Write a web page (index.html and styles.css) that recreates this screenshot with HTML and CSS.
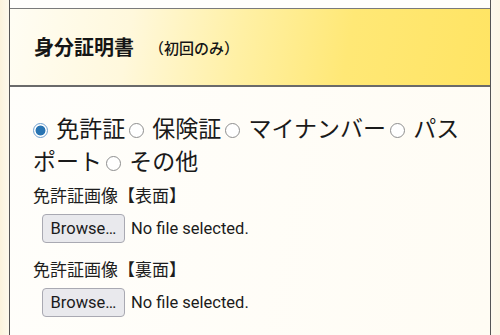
FILE: index.html
```html
<!DOCTYPE html>
<html lang="ja">
<head>
<meta charset="utf-8">
<link rel="stylesheet" href="styles.css">
</head>
<body>
<div class="page">
  <div class="box">
    <div class="top-row"></div>
    <div class="head">
      <span class="title">身分証明書</span><span class="sub">（初回のみ）</span>
    </div>
    <div class="content">
      <div class="radios"><label class="opt"><input class="radio" type="radio" name="id" checked> 免許証</label><label class="opt"><input class="radio" type="radio" name="id"> 保険証</label><label class="opt"><input class="radio" type="radio" name="id"> マイナンバー</label><label class="opt"><input class="radio" type="radio" name="id"> パスポート</label><label class="opt"><input class="radio" type="radio" name="id"> その他</label></div>
      <div class="field first">
        <div class="label">免許証画像【表面】</div>
        <div class="file"><button class="browse" type="button">Browse…</button><span class="status">No file selected.</span></div>
      </div>
      <div class="field second">
        <div class="label">免許証画像【裏面】</div>
        <div class="file"><button class="browse" type="button">Browse…</button><span class="status">No file selected.</span></div>
      </div>
    </div>
  </div>
</div>
</body>
</html>
```
FILE: styles.css
```css
html, body {
  margin: 0;
  padding: 0;
}
body {
  background: #fcf6e3;
  font-family: "Noto Sans CJK JP", "Noto Sans", sans-serif;
  color: #1e1e1e;
  overflow: hidden;
}
.page {
  height: 335px;
  padding: 0 9px;
  background: linear-gradient(90deg, #fbf3dc 0, #fdf9ec 9px, #fdf9ec 491px, #fcf7e6 100%);
}
.box {
  height: 100%;
  border-left: 1px solid #555;
  border-right: 1px solid #555;
  background: linear-gradient(100deg, #fffefb 0%, #fffcf4 100%);
}
.top-row {
  height: 8px;
  background: #fffefc;
}
.head {
  height: 76px;
  border-top: 1px solid #7a7a7a;
  border-bottom: 2px solid #6a6a6a;
  display: flex;
  align-items: center;
  padding-left: 24px;
  background: linear-gradient(100deg, #fffdf4 0%, #fff8dc 25%, #fff0a4 48%, #ffe876 70%, #ffe463 100%);
}
.title {
  font-size: 20px;
  font-weight: 700;
  color: #151515;
  line-height: 1;
}
.sub {
  font-size: 15px;
  font-weight: 500;
  color: #151515;
  margin-left: 15px;
  line-height: 1;
}
.content {
  padding: 24px 23px 0 23px;
}
.radios {
  font-size: 23px;
  line-height: 33px;
  color: #1a1a1a;
}
.radio {
  appearance: none;
  -webkit-appearance: none;
  width: 15px;
  height: 15px;
  margin: 0 3px 0 0;
  border: 1px solid #8e8e8e;
  border-radius: 50%;
  background: #fff;
  vertical-align: -1px;
  box-sizing: border-box;
}
.opt + .opt .radio {
  margin-left: 4px;
}
.radio:checked {
  border-color: #6f9fcf;
  background: radial-gradient(circle, #2874b2 0, #2874b2 4.6px, #ffffff 5.3px);
}
.label {
  font-size: 17px;
  line-height: 25px;
  color: #1e1e1e;
}
.field.first {
  margin-top: 5px;
}
.field.second {
  margin-top: 13px;
}
.file {
  margin-top: 7px;
  padding-left: 9px;
  display: flex;
  align-items: center;
  font-family: Roboto, "Noto Sans", sans-serif;
  font-size: 16.5px;
}
.browse {
  width: 83px;
  height: 29px;
  box-sizing: border-box;
  padding: 0;
  border: 1px solid #a9a9b2;
  border-radius: 4px;
  background: #e9e9ed;
  color: #1b1b1b;
  font-family: Roboto, "Noto Sans", sans-serif;
  font-size: 16.5px;
}
.status {
  margin-left: 6px;
  color: #1b1b1b;
}
```
